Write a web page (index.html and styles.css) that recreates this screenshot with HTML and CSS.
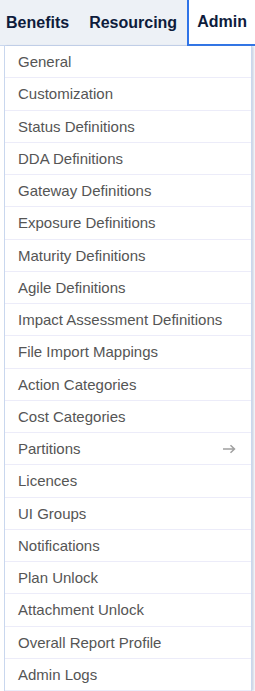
FILE: index.html
```html
<!DOCTYPE html>
<html lang="en">
<head>
    <meta charset="UTF-8">
    <meta name="viewport" content="width=device-width, initial-scale=1.0">
    <title>Admin Menu</title>
    <link rel="stylesheet" href="styles.css">
</head>
<body>

    <header class="topbar">
        <nav class="tabs">
            <a class="tab">Benefits</a>
            <a class="tab">Resourcing</a>
            <a class="tab active">Admin</a>
        </nav>
    </header>

    <ul class="dropdown">
        <li>General</li>
        <li>Customization</li>
        <li>Status Definitions</li>
        <li>DDA Definitions</li>
        <li>Gateway Definitions</li>
        <li>Exposure Definitions</li>
        <li>Maturity Definitions</li>
        <li>Agile Definitions</li>
        <li>Impact Assessment Definitions</li>
        <li>File Import Mappings</li>
        <li>Action Categories</li>
        <li>Cost Categories</li>
        <li class="has-sub">Partitions
            <svg class="arrow" width="14" height="10" viewBox="0 0 14 10">
                <path d="M1 5h11.5M8.5 1.2l4 3.8-4 3.8" fill="none" stroke="#a0a0a0" stroke-width="1.5"/>
            </svg>
        </li>
        <li>Licences</li>
        <li>UI Groups</li>
        <li>Notifications</li>
        <li>Plan Unlock</li>
        <li>Attachment Unlock</li>
        <li>Overall Report Profile</li>
        <li>Admin Logs</li>
    </ul>

</body>
</html>
```

FILE: styles.css
```css
html, body {
    height: 100%;
    margin: 0;
}

body {
    font-family: 'Liberation Sans', Arial, sans-serif;
    background-color: #fff;
    overflow: hidden;
}

.topbar {
    height: 45px;
    background-color: #edf1f6;
    border-bottom: 1px solid #c9d7ee;
}

.tabs {
    display: flex;
    height: 100%;
    margin-left: -4px;
}

.tab {
    display: flex;
    align-items: center;
    padding: 0 8px;
    height: 100%;
    border: 2px solid transparent;
    border-top: none;
    font-size: 16px;
    font-weight: bold;
    color: #0e1c3c;
    cursor: pointer;
}

.tab.active {
    background-color: #fff;
    border-color: #2f74e8;
    height: calc(100% + 1px);
    box-sizing: border-box;
}

.dropdown {
    position: absolute;
    top: 46px;
    left: 4px;
    width: 246px;
    margin: 0;
    padding: 0;
    list-style: none;
    background-color: #fff;
    border-left: 1px solid #c9d7ee;
    border-right: 1px solid #c9d7ee;
    box-shadow: 2px 0 2px rgba(120, 140, 180, 0.35);
}

.dropdown li {
    display: flex;
    align-items: center;
    justify-content: space-between;
    padding: 7px 15px 7px 13px;
    line-height: 17.25px;
    font-size: 15px;
    color: #555;
    border-bottom: 1px solid #ececf9;
}

.dropdown .arrow {
    display: block;
}
```
